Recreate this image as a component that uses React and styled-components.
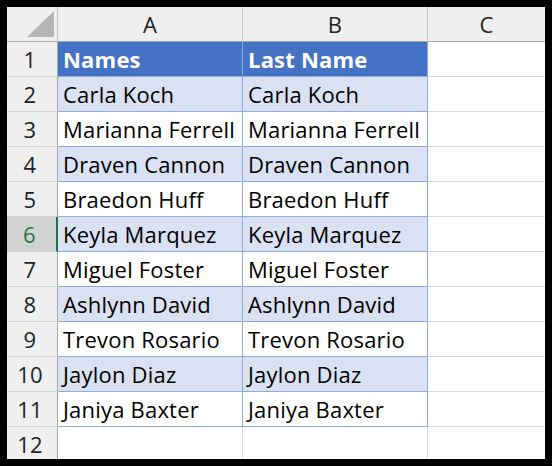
import React from 'react';
import styled, { createGlobalStyle } from 'styled-components';

const names = [
    'Carla Koch',
    'Marianna Ferrell',
    'Draven Cannon',
    'Braedon Huff',
    'Keyla Marquez',
    'Miguel Foster',
    'Ashlynn David',
    'Trevon Rosario',
    'Jaylon Diaz',
    'Janiya Baxter',
];

const SELECTED_ROW = 6;

const App = () => {
    return (
        <>
            <Global />
            <Frame>
                <Sheet>
                    <Corner>
                        <Triangle />
                    </Corner>
                    <ColHead>A</ColHead>
                    <ColHead>B</ColHead>
                    <ColHead last>C</ColHead>

                    <RowHead>1</RowHead>
                    <HeadCell>Names</HeadCell>
                    <HeadCell>Last Name</HeadCell>
                    <Cell />

                    {names.map((n, i) => {
                        const row = i + 2;
                        const banded = i % 2 === 0;
                        return (
                            <React.Fragment key={n}>
                                <RowHead selected={row === SELECTED_ROW}>{row}</RowHead>
                                <DataCell banded={banded}>{n}</DataCell>
                                <DataCell banded={banded}>{n}</DataCell>
                                <Cell />
                            </React.Fragment>
                        );
                    })}

                    <RowHead>12</RowHead>
                    <Cell />
                    <Cell />
                    <Cell />
                </Sheet>
            </Frame>
        </>
    );
};

export default App;

const Global = createGlobalStyle`
      * { box-sizing: border-box; }
      html, body {
        margin: 0;
        padding: 0;
        background: #000;
      }
`

const Frame = styled.div`
      width: 552px;
      height: 466px;
      background: #000;
      padding: 7px 7px 7px 7px;
`

const Sheet = styled.div`
      width: 538px;
      height: 452px;
      overflow: hidden;
      background: #fff;
      display: grid;
      grid-template-columns: 51px 185px 185px 118px;
      grid-template-rows: 35px;
      grid-auto-rows: 35px;
      font-family: "Open Sans", "Noto Sans", sans-serif;
      font-size: 22px;
      letter-spacing: 0.2px;
      color: #000;
`

const Corner = styled.div`
      background: #efefef;
      border-right: 1px solid #c6c6c6;
      border-bottom: 1px solid #a8a8a8;
      position: relative;
`

const Triangle = styled.div`
      position: absolute;
      left: 20px;
      top: 4px;
      width: 27px;
      height: 26px;
      background: #b4b4b4;
      clip-path: polygon(100% 0, 100% 100%, 0 100%);
`

const ColHead = styled.div`
      background: #efefef;
      border-right: 1px solid ${p => (p.last ? '#efefef' : '#c6c6c6')};
      border-bottom: 1px solid #a8a8a8;
      display: flex;
      align-items: center;
      justify-content: center;
      color: #222;
`

const RowHead = styled.div`
      background: ${p => (p.selected ? '#d2d2d2' : '#efefef')};
      color: ${p => (p.selected ? '#217346' : '#222')};
      border-bottom: 1px solid #d4d4d4;
      border-right: ${p => (p.selected ? '2px solid #217346' : '1px solid #a8a8a8')};
      display: flex;
      align-items: center;
      justify-content: center;
      padding-right: 4px;
`

const Cell = styled.div`
      border-right: 1px solid #dadada;
      border-bottom: 1px solid #dadada;
      white-space: nowrap;
      overflow: hidden;
      display: flex;
      align-items: center;
      padding-left: 5px;
`

const HeadCell = styled(Cell)`
      background: #4472c4;
      color: #fff;
      font-weight: 700;
      border-right-color: #8ea9db;
      border-bottom-color: #8ea9db;
`

const DataCell = styled(Cell)`
      background: ${p => (p.banded ? '#d9e1f2' : '#fff')};
      border-right-color: #8ea9db;
      border-bottom-color: #8ea9db;
`
